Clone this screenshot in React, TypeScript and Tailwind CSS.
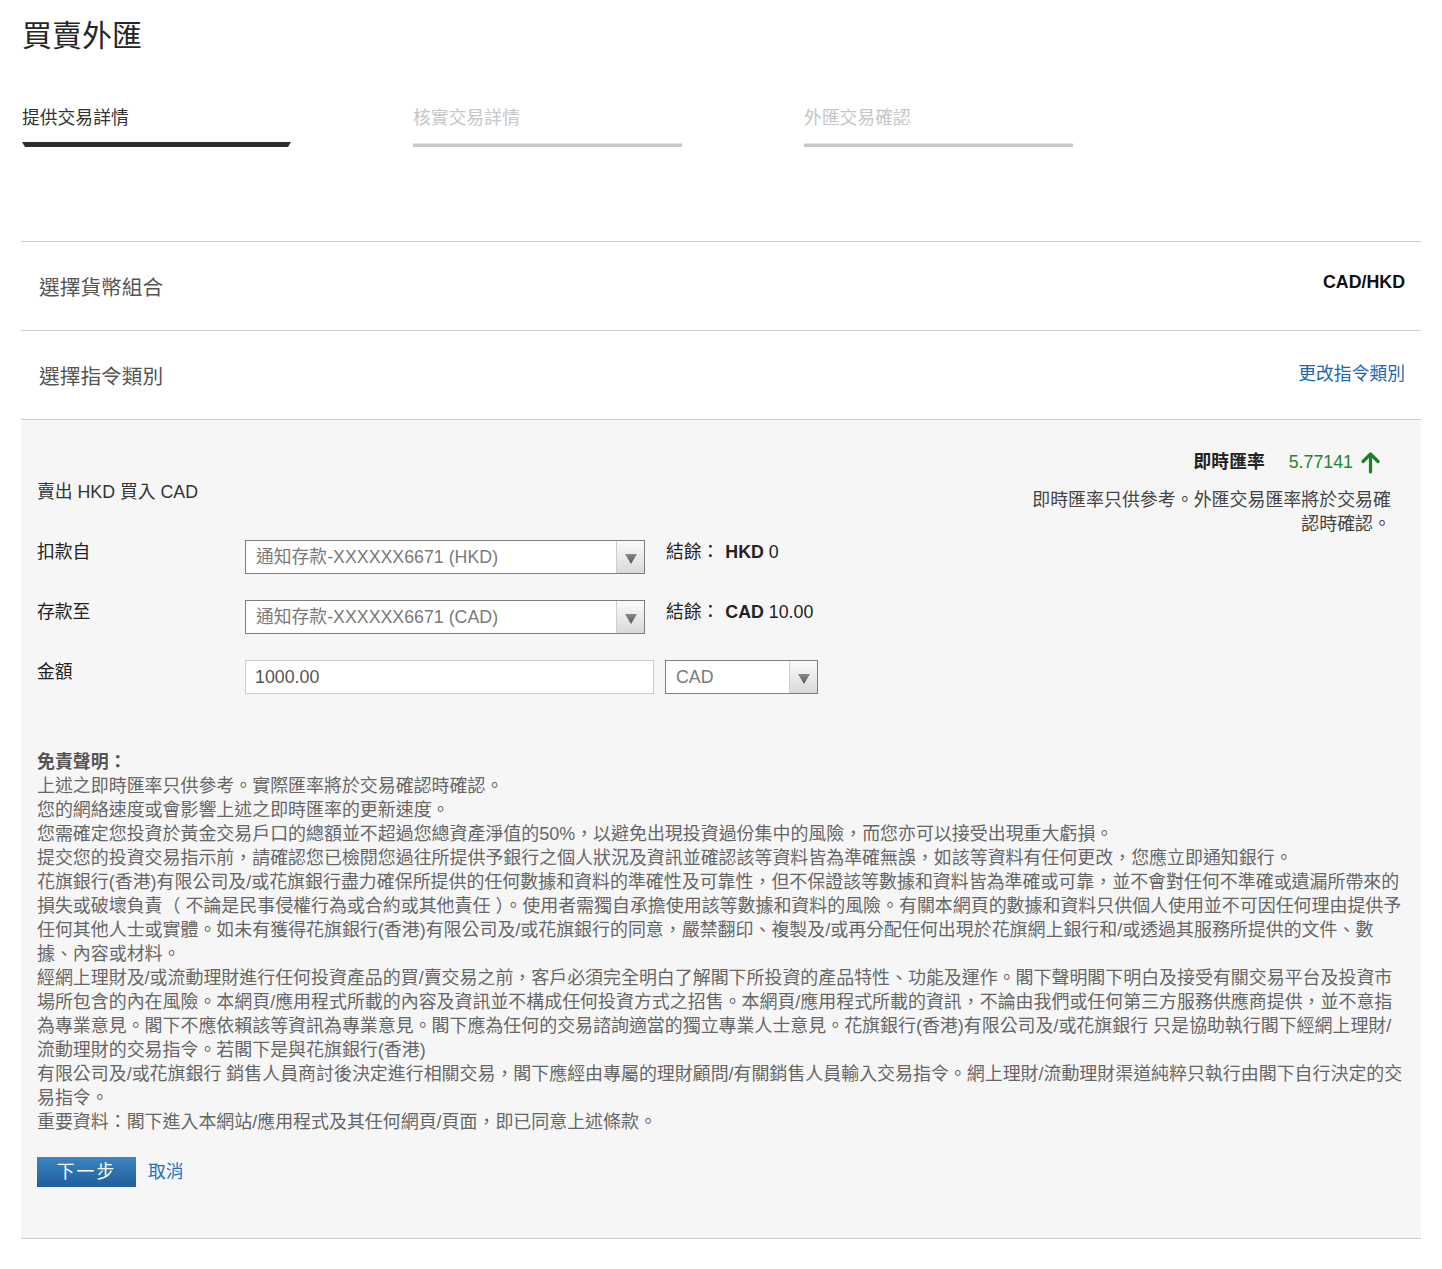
import React from "react";

const FONT = "font-['Liberation_Sans','Noto_Sans_CJK_TC',sans-serif]";

const steps = [
	{ label: "提供交易詳情", active: true },
	{ label: "核實交易詳情", active: false },
	{ label: "外匯交易確認", active: false },
];

function Caret() {
	return (
		<svg width="12" height="11" viewBox="0 0 12 11">
			<defs>
				<linearGradient id="caret" x1="0" y1="0" x2="0" y2="1">
					<stop offset="0" stopColor="#8a8a8a" />
					<stop offset="1" stopColor="#555" />
				</linearGradient>
			</defs>
			<path d="M0 1h12L6 11z" fill="url(#caret)" />
		</svg>
	);
}

function Select({ value, width }: { value: string; width: string }) {
	return (
		<div className={`flex h-[34px] border border-[#7d7d7d] bg-white ${width}`}>
			<div className="flex flex-1 items-center px-[10px] text-[17.8px] text-[#7a7a7a] whitespace-nowrap overflow-hidden">
				{value}
			</div>
			<div className="flex w-[28px] items-center justify-center border-l border-[#cfcfcf] bg-linear-to-b from-[#fbfbfb] to-[#d9d9d9] pt-[3px]">
				<Caret />
			</div>
		</div>
	);
}

function FormRow({ label, children }: { label: string; children: React.ReactNode }) {
	return (
		<div className="flex items-start">
			<div className="w-[208px] text-[17.8px] leading-[24px] text-[#222]">{label}</div>
			{children}
		</div>
	);
}

const disclaimer = [
	"上述之即時匯率只供參考。實際匯率將於交易確認時確認。",
	"您的網絡速度或會影響上述之即時匯率的更新速度。",
	"您需確定您投資於黃金交易戶口的總額並不超過您總資產淨值的50%，以避免出現投資過份集中的風險，而您亦可以接受出現重大虧損。",
	"提交您的投資交易指示前，請確認您已檢閱您過往所提供予銀行之個人狀況及資訊並確認該等資料皆為準確無誤，如該等資料有任何更改，您應立即通知銀行。",
	"花旗銀行(香港)有限公司及/或花旗銀行盡力確保所提供的任何數據和資料的準確性及可靠性，但不保證該等數據和資料皆為準確或可靠，並不會對任何不準確或遺漏所帶來的損失或破壞負責（ 不論是民事侵權行為或合約或其他責任 ）。使用者需獨自承擔使用該等數據和資料的風險。有關本網頁的數據和資料只供個人使用並不可因任何理由提供予任何其他人士或實體。如未有獲得花旗銀行(香港)有限公司及/或花旗銀行的同意，嚴禁翻印、複製及/或再分配任何出現於花旗網上銀行和/或透過其服務所提供的文件、數據、內容或材料。",
	"經網上理財及/或流動理財進行任何投資產品的買/賣交易之前，客戶必須完全明白了解閣下所投資的產品特性、功能及運作。閣下聲明閣下明白及接受有關交易平台及投資市場所包含的內在風險。本網頁/應用程式所載的內容及資訊並不構成任何投資方式之招售。本網頁/應用程式所載的資訊，不論由我們或任何第三方服務供應商提供，並不意指為專業意見。閣下不應依賴該等資訊為專業意見。閣下應為任何的交易諮詢適當的獨立專業人士意見。花旗銀行(香港)有限公司及/或花旗銀行 只是協助執行閣下經網上理財/流動理財的交易指令。若閣下是與花旗銀行(香港)",
	"有限公司及/或花旗銀行 銷售人員商討後決定進行相關交易，閣下應經由專屬的理財顧問/有關銷售人員輸入交易指令。網上理財/流動理財渠道純粹只執行由閣下自行決定的交易指令。",
	"重要資料：閣下進入本網站/應用程式及其任何網頁/頁面，即已同意上述條款。",
];

export default function App() {
	return (
		<main className={`${FONT} min-h-[1269px] w-full bg-white pb-[29px]`}>
			<h1 className="pl-[22px] pt-[18px] text-[30px] leading-[36px] text-[#262626]">買賣外匯</h1>

			{/* steps */}
			<div className="mt-[52px] flex gap-[122px] pl-[22px]">
				{steps.map((s) => (
					<div key={s.label} className="flex w-[269px] flex-col">
						<span
							className={`text-[17.8px] leading-[24px] ${s.active ? "text-[#333]" : "text-[#c6c6c6]"}`}
						>
							{s.label}
						</span>
						<div className="mt-[12px] flex h-[5px] items-end">
							{s.active ? (
								<div className="h-[5px] w-full bg-[#2e2e2e] [clip-path:polygon(0_0,100%_0,calc(100%-3px)_100%,3px_100%)]" />
							) : (
								<div className="h-[4px] w-full border-t border-[#e3e3e3] bg-[#c9c9c9]" />
							)}
						</div>
					</div>
				))}
			</div>

			<div className="mt-[94px] px-[21px]">
				{/* currency pair */}
				<div className="flex h-[89px] justify-between border-t border-[#cfcfcf] pl-[18px] pr-[16px]">
					<div className="pt-[33px] text-[20.7px] leading-[26px] text-[#555]">選擇貨幣組合</div>
					<div className="pt-[28px] text-[17.8px] font-bold leading-[24px] text-[#111]">CAD/HKD</div>
				</div>
				{/* order type */}
				<div className="flex h-[89px] justify-between border-t border-[#cfcfcf] pl-[18px] pr-[16px]">
					<div className="pt-[33px] text-[20.7px] leading-[26px] text-[#555]">選擇指令類別</div>
					<a className="pt-[31px] text-[17.8px] leading-[24px] text-[#1f64b0]">更改指令類別</a>
				</div>

				{/* form panel */}
				<div className="border-y border-[#cfcfcf] bg-[#f6f6f6] pb-[51px] pl-[16px] pr-[15px] pt-[30px]">
					<div className="flex items-start justify-between">
						<div className="mt-[30px] text-[17.8px] leading-[24px] text-[#333]">賣出 HKD 買入 CAD</div>
						<div className="mr-[15px] w-[366px]">
							<div className="flex h-[24px] items-center justify-end pr-[8px]">
								<span className="text-[17.8px] font-bold text-[#222]">即時匯率</span>
								<span className="ml-[24px] text-[17.8px] text-[#25852a]">5.77141</span>
								<svg
									className="ml-[5px]"
									width="25"
									height="24"
									viewBox="0 0 24 24"
									fill="none"
									stroke="#1f7f24"
									strokeWidth="3.2"
									strokeLinecap="round"
									strokeLinejoin="round"
								>
									<path d="M4.5 11.5 12 4l7.5 7.5" />
									<path d="M12 4.5V22" />
								</svg>
							</div>
							<p className="mt-[14px] text-right text-[17.95px] leading-[24px] text-[#444]">
								即時匯率只供參考。外匯交易匯率將於交易確認時確認。
							</p>
						</div>
					</div>

					<div className="mt-[4px] flex flex-col gap-[26px]">
						<FormRow label="扣款自">
							<Select value="通知存款-XXXXXX6671 (HKD)" width="w-[400px]" />
							<div className="ml-[21px] text-[17.8px] leading-[24px] text-[#222]">
								結餘：<b className="ml-[6px]">HKD</b> 0
							</div>
						</FormRow>
						<FormRow label="存款至">
							<Select value="通知存款-XXXXXX6671 (CAD)" width="w-[400px]" />
							<div className="ml-[21px] text-[17.8px] leading-[24px] text-[#222]">
								結餘：<b className="ml-[6px]">CAD</b> 10.00
							</div>
						</FormRow>
						<FormRow label="金額">
							<input
								readOnly
								value="1000.00"
								className="h-[34px] w-[409px] border border-[#cdcdcd] bg-white px-[9px] text-[17.8px] text-[#555] outline-none"
							/>
							<Select value="CAD" width="ml-[11px] w-[153px]" />
						</FormRow>
					</div>

					<div className="mt-[56px] text-[17.95px] leading-[24px] text-[#666]">
						<p className="font-bold text-[#555]">免責聲明：</p>
						{disclaimer.map((line, i) => (
							<p key={i}>{line}</p>
						))}
					</div>

					<div className="mt-[23px] flex items-center">
						<button className="h-[30px] w-[99px] bg-linear-to-b from-[#3a86c3] to-[#235c9b] text-[17.8px] tracking-[2px] text-white">
							下一步
						</button>
						<a className="ml-[12px] text-[17.8px] text-[#1a74c4]">取消</a>
					</div>
				</div>
			</div>
		</main>
	);
}
